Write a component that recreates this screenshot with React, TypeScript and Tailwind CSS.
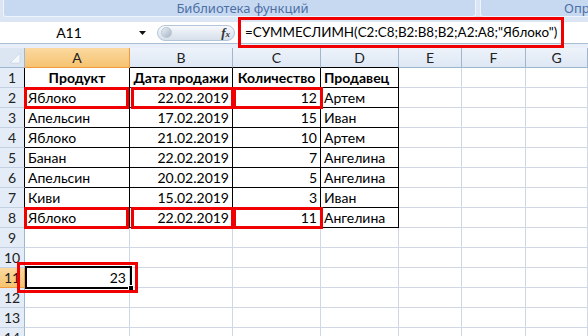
import React from 'react';

type Cell = { v: string; align?: 'l' | 'r' | 'c'; bold?: boolean };

const widths = [105, 103, 88, 78, 63, 64, 62];
const letters = ['A', 'B', 'C', 'D', 'E', 'F', 'G'];

const data: Cell[][] = [
  [
    { v: 'Продукт', align: 'c', bold: true },
    { v: 'Дата продажи', align: 'c', bold: true },
    { v: 'Количество', align: 'c', bold: true },
    { v: 'Продавец', align: 'l', bold: true },
  ],
  [{ v: 'Яблоко' }, { v: '22.02.2019', align: 'r' }, { v: '12', align: 'r' }, { v: 'Артем' }],
  [{ v: 'Апельсин' }, { v: '17.02.2019', align: 'r' }, { v: '15', align: 'r' }, { v: 'Иван' }],
  [{ v: 'Яблоко' }, { v: '21.02.2019', align: 'r' }, { v: '10', align: 'r' }, { v: 'Артем' }],
  [{ v: 'Банан' }, { v: '22.02.2019', align: 'r' }, { v: '7', align: 'r' }, { v: 'Ангелина' }],
  [{ v: 'Апельсин' }, { v: '20.02.2019', align: 'r' }, { v: '5', align: 'r' }, { v: 'Ангелина' }],
  [{ v: 'Киви' }, { v: '15.02.2019', align: 'r' }, { v: '3', align: 'r' }, { v: 'Иван' }],
  [{ v: 'Яблоко' }, { v: '22.02.2019', align: 'r' }, { v: '11', align: 'r' }, { v: 'Ангелина' }],
  [],
  [],
  [{ v: '23', align: 'r' }],
  [],
  [],
  [],
];

const gridCols = 'grid grid-cols-[25px_105px_103px_88px_78px_63px_64px_62px]';

const RedBox = ({ x, y, w, h }: { x: number; y: number; w: number; h: number }) => (
  <div
    className="absolute border-[3px] border-[#f00000] pointer-events-none"
    style={{ left: x, top: y, width: w, height: h }}
  />
);

export default function App() {
  return (
    <div className="relative w-[588px] h-[336px] overflow-hidden bg-white font-['Lato',sans-serif] text-black">
      {/* ribbon strip */}
      <div className="h-[17px] flex gap-[4px] pl-[3px] bg-[#dbe5f3]">
        <div className="w-[473px] flex items-center justify-center pl-[6px] rounded-b-[3px] border-x border-b border-[#eef4fb] bg-[#c6d9f0] text-[13px] text-[#4d6fa8] font-['Noto_Sans',sans-serif] leading-none">
          Библиотека функций
        </div>
        <div className="flex-1 flex items-center pl-[83px] rounded-bl-[3px] border-l border-b border-[#eef4fb] bg-[#c6d9f0] text-[13px] text-[#4d6fa8] font-['Noto_Sans',sans-serif] leading-none whitespace-nowrap overflow-hidden">
          Опре
        </div>
      </div>
      <div className="h-[5px] bg-[#dbe5f3]" />

      {/* formula bar */}
      <div className="h-[22px] flex bg-white border-b border-[#a9bdd5]">
        <div className="w-[157px] flex items-center">
          <div className="flex-1 text-center text-[14px] leading-none">A11</div>
          <svg width="15" height="6" viewBox="0 0 15 6" className="mr-[4px]">
            <path d="M1 1 L8 1 L4.5 5 Z" fill="#111" />
          </svg>
        </div>
        <div className="w-[80px] flex items-center">
          <div className="w-[78px] h-[16px] rounded-full border border-[#b5c5d9] bg-gradient-to-b from-[#f7f9fc] to-[#d6dfeb] flex items-center justify-between pl-[3px] pr-[4px]">
            <div className="w-[11px] h-[11px] rounded-full bg-gradient-to-br from-[#e9eef5] to-[#a9b6c6] border border-[#b9c5d3]" />
            <span className="font-['Liberation_Serif',serif] italic font-bold text-[13px] leading-none text-[#333]">
              f<span className="text-[9px]">x</span>
            </span>
          </div>
        </div>
        <div className="flex-1 flex items-center pl-[8px] text-[13.4px] leading-none whitespace-nowrap">
          =СУММЕСЛИМН(C2:C8;B2:B8;B2;A2:A8;"Яблоко")
        </div>
      </div>
      <div className="h-[4px] bg-[#e8eef7]" />

      {/* column headers */}
      <div className={`${gridCols} h-[20px]`}>
        <div className="relative bg-[#dce6f3] border-r border-b border-[#9eb6ce]">
          <svg width="12" height="12" viewBox="0 0 12 12" className="absolute right-[3px] bottom-[3px]">
            <path d="M11 1 L11 11 L1 11 Z" fill="#f4f7fb" stroke="#b8c8da" strokeWidth="0.5" />
          </svg>
        </div>
        {letters.map((l, i) => (
          <div
            key={l}
            className={
              i === 0
                ? 'flex items-center justify-center text-[14px] leading-none bg-gradient-to-b from-[#fbd9a0] to-[#f6c36f] border-r border-b border-[#f29b3e] text-[#222]'
                : `flex items-center justify-center text-[14px] leading-none bg-gradient-to-b from-[#eef3fa] to-[#dde7f4] border-r border-b text-[#222] ${
                    i < 4 ? 'border-r-[#9eb6ce] border-b-black' : 'border-[#9eb6ce]'
                  }`
            }
          >
            {l}
          </div>
        ))}
      </div>

      {/* rows */}
      {data.map((row, r) => {
        const n = r + 1;
        const inTable = n <= 8;
        const active = n === 11;
        return (
          <div key={n} className={`${gridCols} h-[20px]`}>
            <div
              className={`flex items-center justify-center text-[14px] leading-none text-[#222] border-r border-b ${
                active
                  ? 'bg-gradient-to-b from-[#fbd9a0] to-[#f6c36f] border-b-[#f29b3e] border-r-[#f29b3e]'
                  : `bg-[#e4ecf7] border-b-[#c3d1e3] ${inTable ? 'border-r-black' : 'border-r-[#9eb6ce]'}`
              }`}
            >
              {n}
            </div>
            {widths.map((_, c) => {
              const cell = row[c];
              const tableCell = inTable && c < 4;
              const align =
                cell?.align === 'r'
                  ? 'justify-end pr-[3px]'
                  : cell?.align === 'c'
                  ? 'justify-center'
                  : 'justify-start pl-[3px]';
              return (
                <div
                  key={c}
                  className={`flex items-center pt-[1px] overflow-hidden whitespace-nowrap text-[14px] leading-none border-r border-b ${align} ${
                    tableCell ? 'border-black' : 'border-[#d0d7e5]'
                  } ${cell?.bold ? 'font-bold' : ''}`}
                >
                  {cell?.v}
                </div>
              );
            })}
          </div>
        );
      })}

      {/* selected cell A11 */}
      <div className="absolute left-[25px] top-[266px] w-[107px] h-[23px] border-2 border-black pointer-events-none">
        <div className="absolute -right-[4px] -bottom-[4px] w-[6px] h-[6px] bg-black border border-white" />
      </div>

      {/* red highlight boxes */}
      <RedBox x={238} y={17} w={326} h={31} />
      <RedBox x={24} y={87} w={105} h={22} />
      <RedBox x={131} y={87} w={103} h={22} />
      <RedBox x={233} y={87} w={90} h={22} />
      <RedBox x={24} y={207} w={105} h={22} />
      <RedBox x={131} y={207} w={103} h={22} />
      <RedBox x={233} y={207} w={90} h={22} />
      <RedBox x={17} y={262} w={121} h={31} />
    </div>
  );
}
